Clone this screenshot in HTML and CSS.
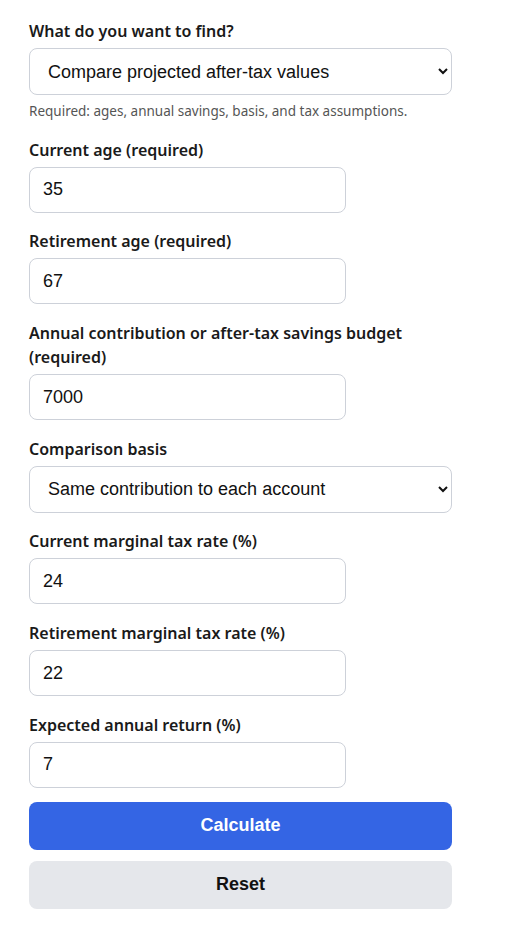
FILE: index.html
```html
<!DOCTYPE html>
<html lang="en">
<head>
    <meta charset="UTF-8">
    <meta name="viewport" content="width=device-width, initial-scale=1.0">
    <title>Traditional vs Roth Calculator</title>
    <link rel="stylesheet" href="styles.css">
</head>
<body>
    <form class="calc-form" id="calc-form">
        <div class="field">
            <label for="goal">What do you want to find?</label>
            <select id="goal" class="control">
                <option>Compare projected after-tax values</option>
                <option>Find break-even retirement tax rate</option>
            </select>
            <p class="hint">Required: ages, annual savings, basis, and tax assumptions.</p>
        </div>

        <div class="field">
            <label for="current-age">Current age (required)</label>
            <input type="text" id="current-age" class="control short" value="35">
        </div>

        <div class="field">
            <label for="retire-age">Retirement age (required)</label>
            <input type="text" id="retire-age" class="control short" value="67">
        </div>

        <div class="field">
            <label for="contribution">Annual contribution or after-tax savings budget (required)</label>
            <input type="text" id="contribution" class="control short" value="7000">
        </div>

        <div class="field">
            <label for="basis">Comparison basis</label>
            <select id="basis" class="control">
                <option>Same contribution to each account</option>
                <option>Same after-tax budget</option>
            </select>
        </div>

        <div class="field">
            <label for="current-rate">Current marginal tax rate (%)</label>
            <input type="text" id="current-rate" class="control short" value="24">
        </div>

        <div class="field">
            <label for="retire-rate">Retirement marginal tax rate (%)</label>
            <input type="text" id="retire-rate" class="control short" value="22">
        </div>

        <div class="field">
            <label for="return">Expected annual return (%)</label>
            <input type="text" id="return" class="control short" value="7">
        </div>

        <div class="actions">
            <button type="submit" class="btn btn-primary">Calculate</button>
            <button type="reset" class="btn btn-secondary">Reset</button>
        </div>
    </form>
</body>
</html>
```

FILE: styles.css
```css
body {
    margin: 0;
    padding: 19px 29px;
    background: #fff;
    color: #1a1a1a;
    font-family: "Noto Sans", sans-serif;
}

.calc-form {
    width: 423px;
}

.field {
    margin-bottom: 16.7px;
}

.field label {
    display: block;
    font-size: 16px;
    font-weight: 600;
    line-height: 24px;
    margin-bottom: 5px;
}

.control {
    display: block;
    box-sizing: border-box;
    width: 100%;
    height: 46px;
    padding: 0 13px;
    border: 1px solid #cdd1d9;
    border-radius: 8px;
    background: #fff;
    color: #111;
    font-family: "Liberation Sans", Arial, sans-serif;
    font-size: 18px;
}

select.control {
    height: 47px;
    padding-left: 14px;
}

.control.short {
    width: 317px;
}

.hint {
    margin: 6px 0 0;
    font-size: 13.5px;
    line-height: 20px;
    color: #555;
}

.actions {
    display: flex;
    flex-direction: column;
    gap: 11px;
    margin-top: -3px;
}

.btn {
    height: 48px;
    border: none;
    border-radius: 8px;
    font-family: "Liberation Sans", Arial, sans-serif;
    font-size: 18px;
    font-weight: bold;
    cursor: pointer;
}

.btn-primary {
    background: #3465e4;
    color: #fff;
}

.btn-secondary {
    background: #e5e7eb;
    color: #111;
}
```
